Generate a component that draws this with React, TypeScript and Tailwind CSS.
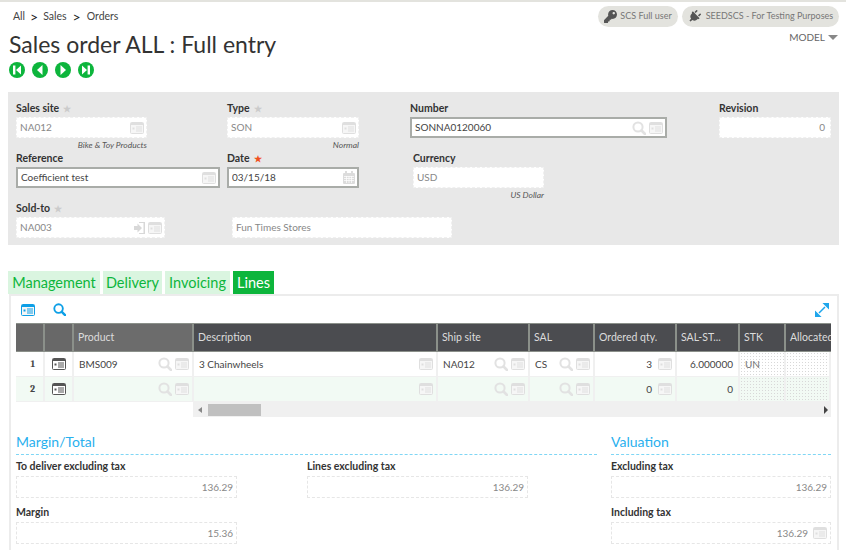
import React from 'react';
import { FaKey, FaPlug } from 'react-icons/fa';

const CardIcon = ({ className = 'text-[#dfdfdf]', dark = false }: { className?: string; dark?: boolean }) => (
  <svg width="14" height="12" viewBox="0 0 14 12" className={`shrink-0 ${className}`}>
    <rect x="0.5" y="0.5" width="13" height="11" rx="1" fill={dark ? '#fff' : '#f6f6f6'} stroke="currentColor" />
    <rect x="1" y="1" width="12" height="2" fill="currentColor" />
    <rect x="2.5" y="5.5" width="2" height="2" fill="currentColor" />
    <path d="M6 5h6M6 7h6M6 9h6" stroke="currentColor" />
  </svg>
);

const SearchIcon = ({ className = 'text-[#e2e2e2]', size = 14 }: { className?: string; size?: number }) => (
  <svg width={size} height={size} viewBox="0 0 14 14" className={`shrink-0 ${className}`}>
    <circle cx="6" cy="6" r="4.6" fill="none" stroke="currentColor" strokeWidth="2" />
    <path d="M9.5 9.5L13 13" stroke="currentColor" strokeWidth="2.6" strokeLinecap="round" />
  </svg>
);

const LinkIcon = () => (
  <svg width="11" height="12" viewBox="0 0 11 12" className="shrink-0 text-[#d8d8d8]">
    <path d="M0 4h3.500V1.500L8 6l-4.500 4.500V8H0z" fill="currentColor" />
    <path d="M5 0h6v12H5v-1h4.500V1H5z" fill="currentColor" />
  </svg>
);

const CalendarIcon = () => (
  <svg width="12" height="13" viewBox="0 0 12 13" className="shrink-0 text-[#dcdcdc]">
    <rect x="0" y="2" width="12" height="11" rx="1" fill="currentColor" />
    <rect x="2" y="0" width="2" height="3" fill="currentColor" />
    <rect x="8" y="0" width="2" height="3" fill="currentColor" />
    <path d="M1 5.5h10M1 7.5h10M1 9.5h10M3.5 5v7M6 5v7M8.5 5v7" stroke="#fff" strokeWidth="0.7" />
  </svg>
);

const NavButton = ({ kind }: { kind: 'first' | 'prev' | 'next' | 'last' }) => (
  <svg width="16" height="16" viewBox="0 0 16 16">
    <circle cx="8" cy="8" r="8" fill="#0db53c" />
    {kind === 'first' && <path d="M4 3.500h2.400v9H4zM7 8l5-4.500v9z" fill="#fff" />}
    {kind === 'prev' && <path d="M5 8l5.500-5v10z" fill="#fff" />}
    {kind === 'next' && <path d="M11 8L5.500 3v10z" fill="#fff" />}
    {kind === 'last' && <path d="M12 3.500H9.600v9H12zM9 8L4 3.500v9z" fill="#fff" />}
  </svg>
);

const Star = ({ color = 'text-[#cbcbcb]' }: { color?: string }) => <span className={`ml-[4px] text-[9px] leading-none ${color}`}>★</span>;

type FieldProps = {
  label?: string;
  star?: 'gray' | 'red';
  value: string;
  width: string;
  marginLeft?: string;
  active?: boolean;
  hint?: string;
  right?: boolean;
  children?: React.ReactNode;
};

const HeadField = ({ label, star, value, width, marginLeft = '', active, hint, right, children }: FieldProps) => (
  <div className={`shrink-0 ${width} ${marginLeft}`}>
    <div className="flex h-[18px] items-center pt-[1px] text-[10.5px] font-bold text-[#333]">
      {label}
      {star === 'gray' && <Star />}
      {star === 'red' && <Star color="text-[#f0501e]" />}
    </div>
    <div
      className={`flex h-[21px] items-center gap-[3px] bg-white pl-[3px] pr-[2px] text-[10px] ${
        active ? 'border-2 border-[#a9aca8] text-[#444]' : 'border border-dashed border-[#f0f0f0] text-[#888]'
      }`}
    >
      <span className={`flex-1 truncate ${right ? 'pr-[3px] text-right' : ''}`}>{value}</span>
      {children}
    </div>
    {hint && <div className="mt-[1px] h-[13px] text-right text-[8.5px] italic leading-[13px] text-[#555]">{hint}</div>}
  </div>
);

const Tab = ({ label, active, className = '' }: { label: string; active?: boolean; className?: string }) => (
  <div
    className={`flex h-[23px] items-center justify-center text-[14.5px] ${className} ${
      active ? 'bg-[#0db53c] text-white' : 'bg-[#daf5e0] text-[#0db53c]'
    }`}
  >
    {label}
  </div>
);

const headers = [
  { label: '', bg: 'bg-[#686868]' },
  { label: '', bg: 'bg-[#686868]' },
  { label: 'Product', bg: 'bg-[#6c6c6c]' },
  { label: 'Description', bg: 'bg-[#4b4c50]' },
  { label: 'Ship site', bg: 'bg-[#4b4c50]' },
  { label: 'SAL', bg: 'bg-[#4b4c50]' },
  { label: 'Ordered qty.', bg: 'bg-[#4b4c50]' },
  { label: 'SAL-ST...', bg: 'bg-[#4b4c50]' },
  { label: 'STK', bg: 'bg-[#4b4c50]' },
  { label: 'Allocated', bg: 'bg-[#4b4c50]' }
];

const dotted = 'bg-[radial-gradient(#d8d8d8_1px,transparent_1px)] bg-[length:3px_3px]';

const Cell = ({ children, className = '' }: { children?: React.ReactNode; className?: string }) => (
  <div className={`flex h-[25px] items-center gap-[3px] overflow-hidden border-r-2 border-b border-[#f0f0f0] text-[10px] text-[#444] ${className}`}>
    {children}
  </div>
);

const Row = ({ index, values, tint }: { index: number; values: string[]; tint: string }) => (
  <>
    <Cell className={`${tint} justify-end pr-[8px] font-serif text-[9px] font-bold`}>{index}</Cell>
    <Cell className={`${tint} justify-center`}>
      <CardIcon className="text-[#555]" dark />
    </Cell>
    <Cell className={`${tint} pl-[5px] pr-[3px]`}>
      <span className="flex-1">{values[0]}</span>
      <SearchIcon />
      <CardIcon />
    </Cell>
    <Cell className={`${tint} pl-[5px] pr-[3px]`}>
      <span className="flex-1">{values[1]}</span>
      <CardIcon />
    </Cell>
    <Cell className={`${tint} pl-[5px] pr-[3px]`}>
      <span className="flex-1">{values[2]}</span>
      <SearchIcon />
      <CardIcon />
    </Cell>
    <Cell className={`${tint} pl-[5px] pr-[3px]`}>
      <span className="flex-1">{values[3]}</span>
      <SearchIcon />
      <CardIcon />
    </Cell>
    <Cell className={`${tint} pr-[3px]`}>
      <span className="flex-1 pr-[3px] text-right">{values[4]}</span>
      <CardIcon />
    </Cell>
    <Cell className={`${tint} justify-end pr-[5px]`}>{values[5]}</Cell>
    <Cell className={`${tint} ${dotted} pl-[5px] text-[#777]`}>{values[6]}</Cell>
    <Cell className={`${tint} ${dotted} border-r-0`} />
  </>
);

const TotalField = ({ label, value, icon, className = '' }: { label: string; value: string; icon?: boolean; className?: string }) => (
  <div className={className}>
    <div className="flex h-[18px] items-center text-[10.5px] font-bold text-[#333]">{label}</div>
    <div className="flex h-[22px] items-center justify-end gap-[5px] border border-dashed border-[#e6e6e6] pr-[3px] text-[10px] text-[#888]">
      {value}
      {icon && <CardIcon />}
    </div>
  </div>
);

const SectionTitle = ({ children }: { children: React.ReactNode }) => (
  <div className="h-[23px] border-b border-dashed border-[#7fd6f5] text-[14px] leading-[20px] text-[#29b0ee]">{children}</div>
);

export default function App() {
  return (
    <div className="h-[550px] w-[846px] overflow-hidden bg-white font-['Lato',sans-serif]">
      <div className="h-[2px] bg-[#e3e3de]" />

      <div className="flex h-[28px] items-center justify-between pl-[13px] pr-[7px]">
        <div className="flex items-center pt-[1px] text-[10.5px] text-[#444]">
          All
          <span className="mx-[5px] text-[14px] leading-none text-[#222]">&gt;</span>
          Sales
          <span className="mx-[6px] text-[14px] leading-none text-[#222]">&gt;</span>
          Orders
        </div>
        <div className="flex items-center gap-[4px] whitespace-nowrap text-[9px] text-[#777]">
          <div className="flex h-[21px] w-[80px] items-center justify-center gap-[3px] rounded-full bg-[#e3e3de]">
            <FaKey className="h-[13px] w-[13px] shrink-0 text-[#555]" />
            SCS Full user
          </div>
          <div className="flex h-[21px] w-[157px] items-center justify-center gap-[5px] rounded-full bg-[#e3e3de]">
            <FaPlug className="h-[13px] w-[13px] shrink-0 rotate-45 text-[#555]" />
            SEEDSCS - For Testing Purposes
          </div>
        </div>
      </div>

      <div className="flex h-[32px] items-start justify-between pl-[9px] pr-[8px]">
        <h1 className="text-[23px] leading-[29px] text-[#333]">Sales order ALL : Full entry</h1>
        <div className="flex items-center gap-[3px] text-[10px] text-[#666]">
          MODEL
          <span className="h-0 w-0 border-x-[5px] border-t-[5px] border-x-transparent border-t-[#888]" />
        </div>
      </div>

      <div className="flex h-[30px] items-start gap-[7px] pl-[9px]">
        <NavButton kind="first" />
        <NavButton kind="prev" />
        <NavButton kind="next" />
        <NavButton kind="last" />
      </div>

      <div className="mx-[8px] h-[153px] w-[831px] bg-[#e8e8e8] px-[8px] pt-[7px]">
        <div className="flex h-[50px]">
          <HeadField label="Sales site" star="gray" value="NA012" width="w-[131px]" hint="Bike & Toy Products">
            <CardIcon />
          </HeadField>
          <HeadField label="Type" star="gray" value="SON" width="w-[132px]" marginLeft="ml-[80px]" hint="Normal">
            <CardIcon />
          </HeadField>
          <HeadField label="Number" value="SONNA0120060" width="w-[257px]" marginLeft="ml-[51px]" active>
            <SearchIcon />
            <CardIcon />
          </HeadField>
          <HeadField label="Revision" value="0" width="w-[112px]" marginLeft="ml-[52px]" right />
        </div>
        <div className="flex h-[50px]">
          <HeadField label="Reference" value="Coefficient test" width="w-[204px]" active>
            <CardIcon />
          </HeadField>
          <HeadField label="Date" star="red" value="03/15/18" width="w-[132px]" marginLeft="ml-[7px]" active>
            <CalendarIcon />
          </HeadField>
          <HeadField label="Currency" value="USD" width="w-[131px]" marginLeft="ml-[54px]" hint="US Dollar" />
        </div>
        <div className="flex">
          <HeadField label="Sold-to" star="gray" value="NA003" width="w-[149px]">
            <LinkIcon />
            <CardIcon />
          </HeadField>
          <HeadField value="Fun Times Stores" width="w-[220px]" marginLeft="ml-[67px]" />
        </div>
      </div>

      <div className="ml-[8px] mt-[26px] flex gap-[3px]">
        <Tab label="Management" className="w-[92px]" />
        <Tab label="Delivery" className="w-[59px]" />
        <Tab label="Invoicing" className="w-[65px]" />
        <Tab label="Lines" active className="w-[41px]" />
      </div>

      <div className="ml-[9px] h-[256px] w-[830px] border-x-2 border-t-2 border-[#ececec] pl-[5px] pr-[6px]">
        <div className="flex h-[27px] items-center justify-between pl-[5px] pr-[2px]">
          <div className="flex items-center gap-[18px]">
            <CardIcon className="text-[#0d9fe6]" />
            <SearchIcon className="text-[#0d9fe6]" size={13} />
          </div>
          <svg width="14" height="14" viewBox="0 0 14 14" className="text-[#1fa6ec]">
            <path d="M8.500 0H14v5.500zM0 8.500V14h5.500zM10 4L4 10" fill="currentColor" stroke="currentColor" strokeWidth="1.500" />
          </svg>
        </div>

        <div className="grid grid-cols-[29px_29px_120px_244px_92px_65px_82px_63px_46px_45px]">
          {headers.map((h, i) => (
            <div
              key={i}
              className={`flex h-[29px] items-center overflow-hidden whitespace-nowrap border-y border-[#8b908a] pl-[4px] pt-[1px] text-[10.5px] text-[#dcdcdc] ${h.bg} ${
                i < headers.length - 1 ? 'border-r-2' : ''
              }`}
            >
              {h.label}
            </div>
          ))}
          <Row index={1} tint="bg-white" values={['BMS009', '3 Chainwheels', 'NA012', 'CS', '3', '6.000000', 'UN']} />
          <Row index={2} tint="bg-[#f2faf4]" values={['', '', '', '', '0', '0', '']} />
        </div>

        <div className="ml-[177px] flex h-[15px] items-center justify-between bg-[#f0f0f0] pl-[5px] pr-[3px]">
          <div className="flex h-full items-center">
            <span className="h-0 w-0 border-y-[3px] border-r-[4px] border-y-transparent border-r-[#888]" />
            <div className="ml-[6px] h-[12px] w-[53px] bg-[#c0c0c0]" />
          </div>
          <span className="h-0 w-0 border-y-[4px] border-l-[4px] border-y-transparent border-l-[#444]" />
        </div>

        <div className="mt-[15px] flex gap-[14px]">
          <div className="w-[581px]">
            <SectionTitle>Margin/Total</SectionTitle>
            <div className="mt-[3px] grid grid-cols-[221px_221px] gap-x-[70px] gap-y-[6px]">
              <TotalField label="To deliver excluding tax" value="136.29" />
              <TotalField label="Lines excluding tax" value="136.29" />
              <TotalField label="Margin" value="15.36" />
            </div>
          </div>
          <div className="w-[220px]">
            <SectionTitle>Valuation</SectionTitle>
            <div className="mt-[3px] flex flex-col gap-[6px]">
              <TotalField label="Excluding tax" value="136.29" />
              <TotalField label="Including tax" value="136.29" icon />
            </div>
          </div>
        </div>
      </div>
    </div>
  );
}
